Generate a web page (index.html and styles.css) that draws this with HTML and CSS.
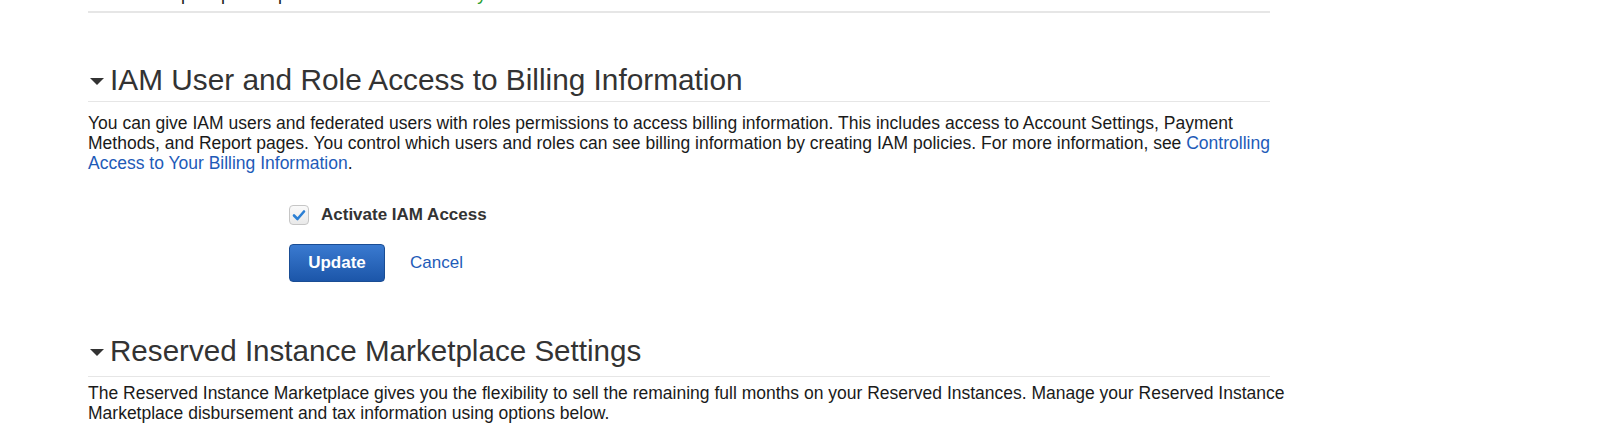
FILE: index.html
```html
<!DOCTYPE html>
<html lang="en">
<head>
    <meta charset="UTF-8">
    <title>Account Settings</title>
    <link rel="stylesheet" href="styles.css">
</head>
<body>

    <div class="page">
        <div class="prev-tail">
            <span class="prev-text">Step 1 upon request</span>
            <span class="prev-status">Verify</span>
        </div>

        <div class="section">
            <h2 class="section-title"><span class="caret"></span>IAM User and Role Access to Billing Information</h2>
            <p class="section-text">You can give IAM users and federated users with roles permissions to access billing information. This includes access to Account Settings, Payment Methods, and Report pages. You control which users and roles can see billing information by creating IAM policies. For more information, see <a href="#">Controlling Access to Your Billing Information</a>.</p>

            <div class="form">
                <label class="check-row">
                    <span class="checkbox">
                        <svg width="14" height="12" viewBox="0 0 14 12"><path d="M2 6.5 L5.5 10 L12 2.5" fill="none" stroke="#2b7fd4" stroke-width="2.6" stroke-linecap="round" stroke-linejoin="round"/></svg>
                    </span>
                    Activate IAM Access
                </label>
                <div class="actions">
                    <button class="btn-primary">Update</button>
                    <a href="#" class="cancel">Cancel</a>
                </div>
            </div>
        </div>

        <div class="section section-market">
            <h2 class="section-title"><span class="caret"></span>Reserved Instance Marketplace Settings</h2>
            <p class="section-text">The Reserved Instance Marketplace gives you the flexibility to sell the remaining full months on your Reserved Instances. Manage your Reserved Instance Marketplace disbursement and tax information using options below.</p>
        </div>
    </div>

</body>
</html>
```

FILE: styles.css
```css
:root {
    --text-color: #1a1a1a;
    --heading-color: #333;
    --link-color: #1e5bb8;
    --rule-color: #e6e6e6;
}

html, body {
    margin: 0;
    padding: 0;
    background: #fff;
    overflow: hidden;
}

body {
    font-family: "Liberation Sans", Arial, Helvetica, sans-serif;
    color: var(--text-color);
}

.page {
    margin-left: 88px;
    width: 1182px;
}

.prev-tail {
    margin-top: -16px;
    height: 29px;
    line-height: 20px;
    font-size: 18px;
    border-bottom: 2px solid var(--rule-color);
    padding-left: 66px;
    box-sizing: border-box;
}

.prev-status {
    color: #2a9d2a;
    margin-left: 120px;
}

.section {
    margin-top: 49px;
}

.section-market {
    margin-top: 51px;
}

.section-title {
    margin: 0;
    font-size: 29.8px;
    font-weight: normal;
    color: var(--heading-color);
    line-height: 36px;
    padding-bottom: 3px;
    border-bottom: 1px solid var(--rule-color);
    display: flex;
    align-items: center;
}

.section-market .section-title {
    font-size: 29.6px;
    padding-bottom: 7px;
}

.caret {
    width: 0;
    height: 0;
    border-left: 7px solid transparent;
    border-right: 7px solid transparent;
    border-top: 7px solid #333;
    margin: 2px 6px 0 2px;
}

.section-text {
    margin: 11px -24px 0 0;
    font-size: 17.5px;
    line-height: 20px;
}

.section-market .section-text {
    margin-top: 6px;
}

.section-text a,
.cancel {
    color: var(--link-color);
    text-decoration: none;
}

.form {
    margin-left: 201px;
    padding-top: 32px;
}

.check-row {
    display: flex;
    align-items: center;
    font-size: 17px;
    font-weight: bold;
    color: #333;
}

.checkbox {
    width: 18px;
    height: 18px;
    border: 1px solid #c6c6c6;
    border-radius: 4px;
    background: linear-gradient(#fafafa, #e9e9e9);
    display: flex;
    align-items: center;
    justify-content: center;
    margin-right: 12px;
}

.actions {
    display: flex;
    align-items: center;
    margin-top: 19px;
}

.btn-primary {
    width: 96px;
    height: 38px;
    font-family: inherit;
    font-size: 17px;
    font-weight: bold;
    color: #fff;
    background: linear-gradient(#3a7ad0, #1c56a9);
    border: 1px solid #1a4d94;
    border-radius: 4px;
    cursor: pointer;
}

.cancel {
    font-size: 17px;
    margin-left: 25px;
}
```
